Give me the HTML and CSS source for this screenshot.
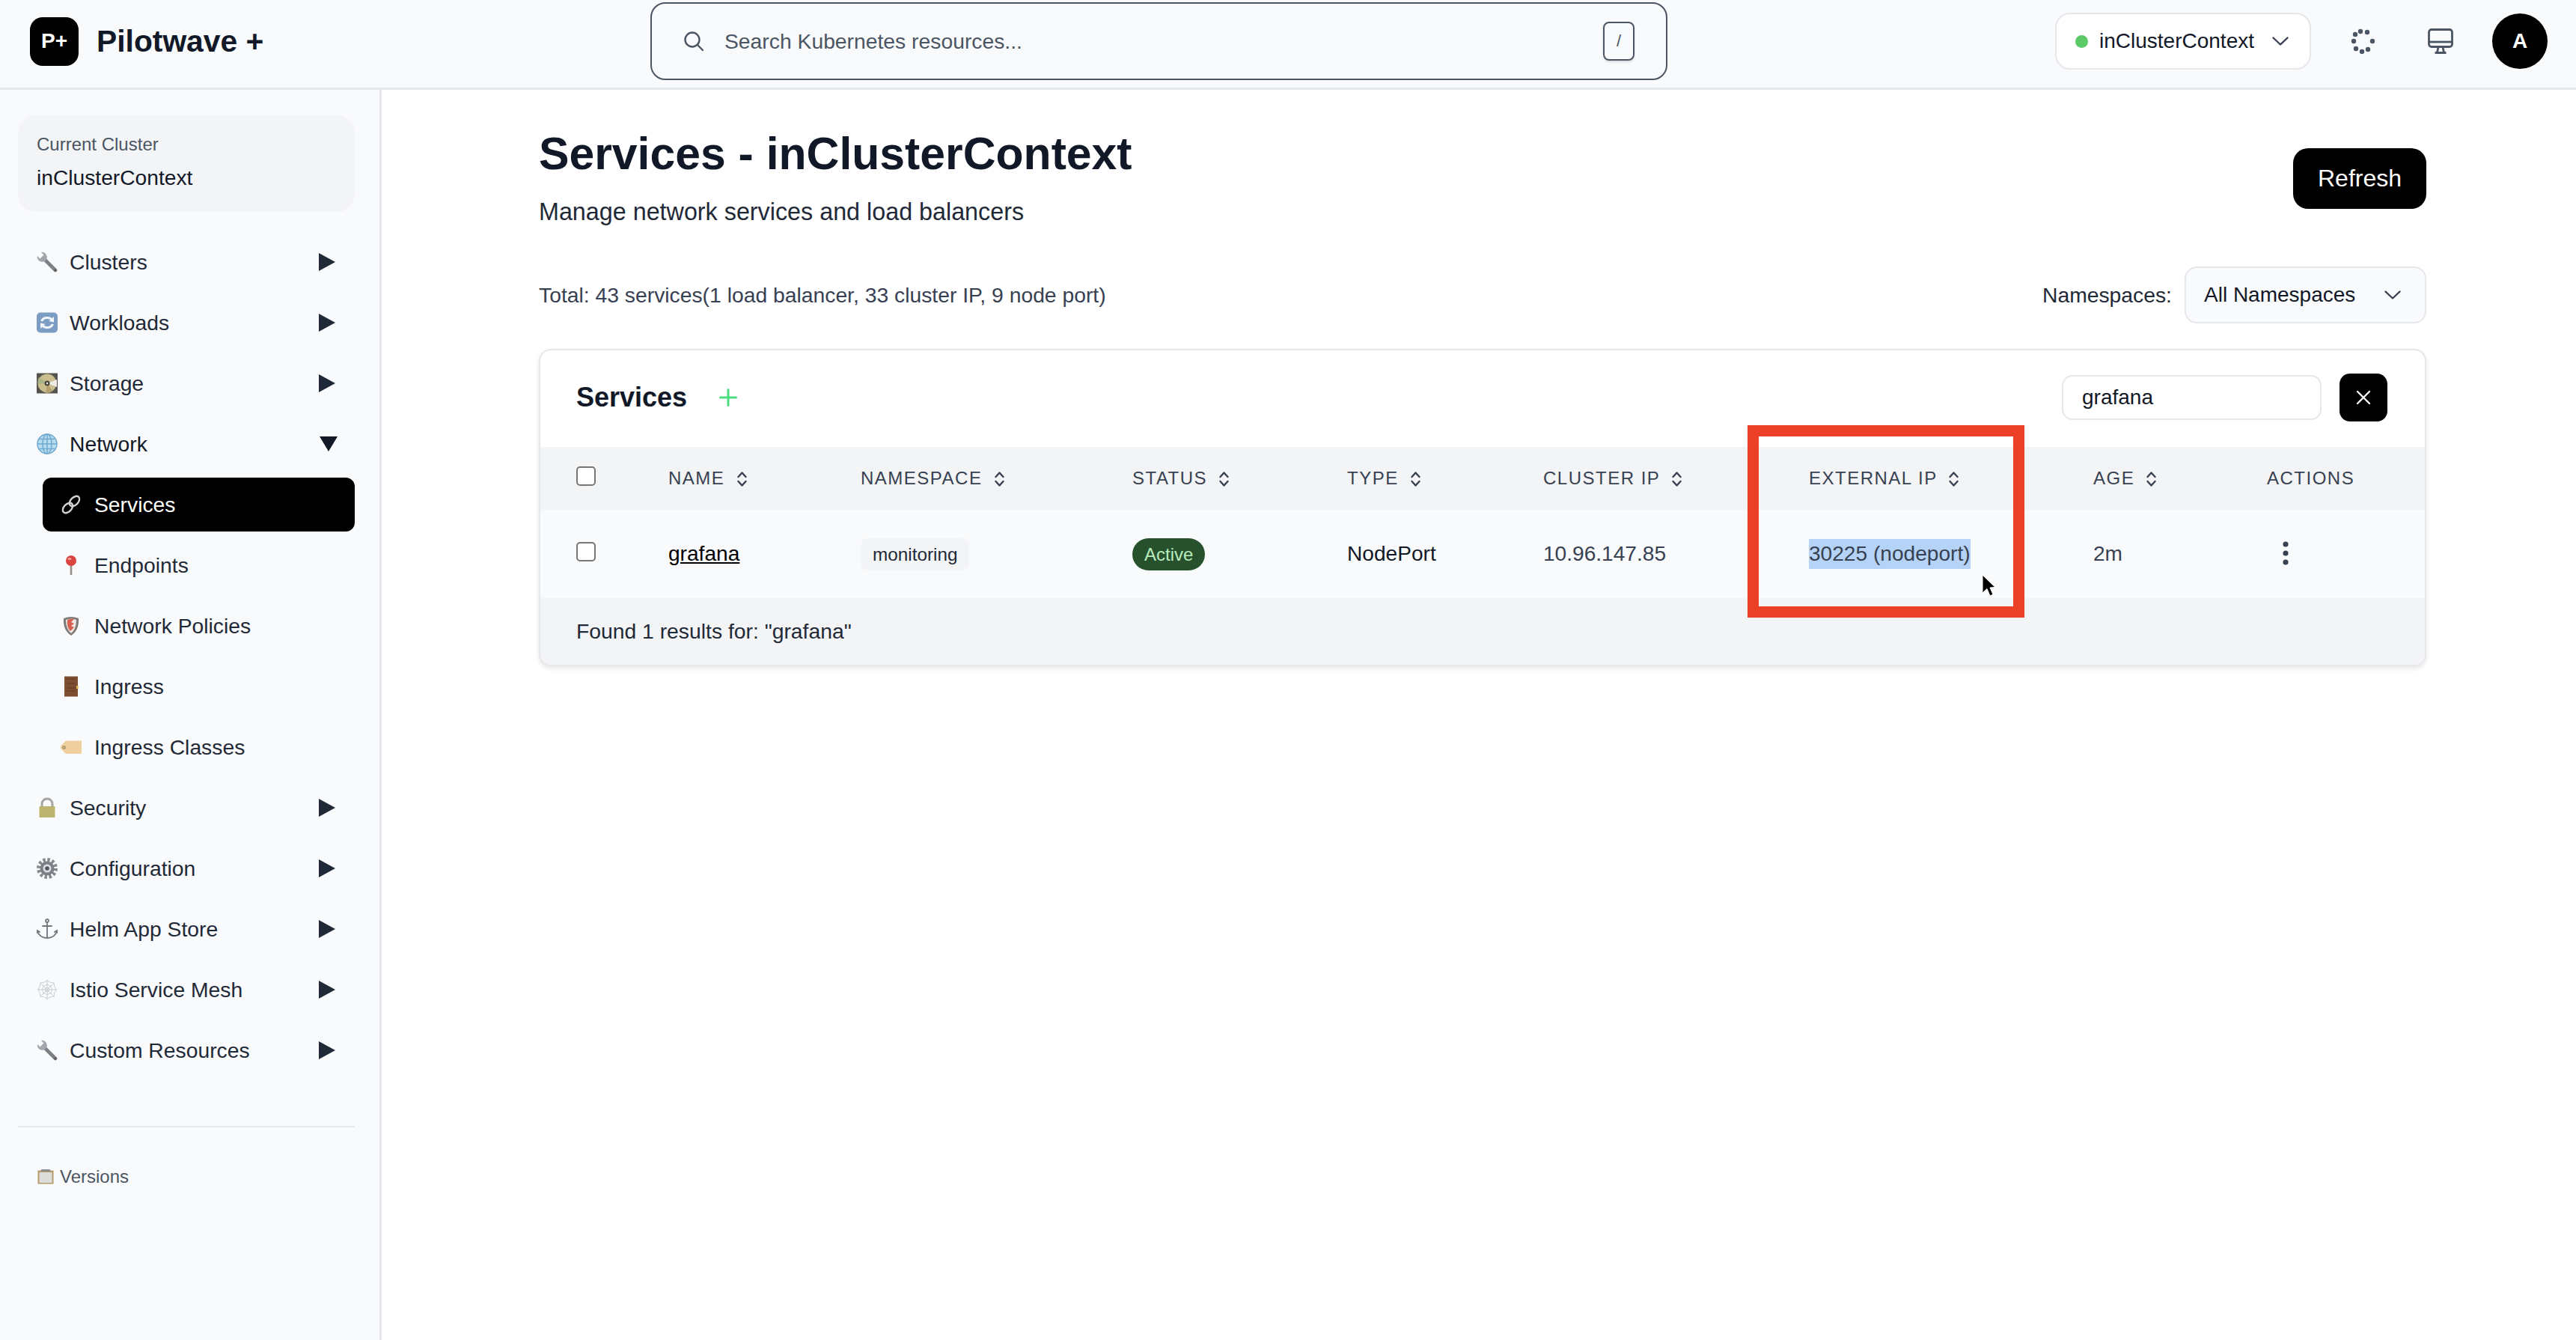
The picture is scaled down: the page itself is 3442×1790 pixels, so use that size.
FILE: index.html
```html
<!DOCTYPE html>
<html lang="en">
<head>
  <meta charset="UTF-8">
  <meta name="viewport" content="width=device-width, initial-scale=1.0">
  <title>Services - inClusterContext</title>
  <link rel="stylesheet" href="styles.css">
</head>
<body>
  <svg class="icon-defs" aria-hidden="true">
    <symbol id="ic-wrench" viewBox="0 0 28 28">
      <path d="M10 10 L25 25" stroke="#7d8086" stroke-width="4.600" stroke-linecap="round" fill="none"/>
      <path d="M6 1 L9.500 4.500 L4.500 9.500 L1 6 A6.500 6.500 0 1 0 6 1 Z" fill="#a2a5ab"/>
      <circle cx="25" cy="25" r="1.600" fill="#5f5454"/>
    </symbol>
    <symbol id="ic-sort" viewBox="0 0 15 22">
      <path d="M2.500 8 L7.500 2.500 L12.500 8 M2.500 14 L7.500 19.500 L12.500 14" stroke="#374151" stroke-width="2.400" fill="none" stroke-linecap="round" stroke-linejoin="round"/>
    </symbol>
  </svg>

  <header class="topbar">
    <div class="brand">
      <div class="brand-logo">P+</div>
      <div class="brand-name">Pilotwave +</div>
    </div>
    <div class="global-search">
      <svg class="search-icon" viewBox="0 0 28 28" fill="none" stroke="#4b5563" stroke-width="2.400" stroke-linecap="round">
        <circle cx="12" cy="12" r="9.500"/>
        <path d="M19 19 L26 26"/>
      </svg>
      <span class="search-text">Search Kubernetes resources...</span>
      <kbd class="search-key">/</kbd>
    </div>
    <div class="topbar-right">
      <div class="cluster-picker">
        <span class="status-dot"></span>
        <span class="cluster-name">inClusterContext</span>
        <svg class="chevron" viewBox="0 0 22 12" fill="none" stroke="#374151" stroke-width="2.400" stroke-linecap="round" stroke-linejoin="round">
          <path d="M1.500 1.500 L11 10.500 L20.500 1.500"/>
        </svg>
      </div>
      <svg class="spinner" viewBox="0 0 34 34" fill="#4b5563">
        <circle cx="13" cy="4" r="3.200"/>
        <circle cx="22" cy="5" r="3.200"/>
        <circle cx="29" cy="17" r="3.200"/>
        <circle cx="23" cy="28" r="3.200"/>
        <circle cx="15" cy="31" r="3.200"/>
        <circle cx="7" cy="27" r="3.200"/>
        <circle cx="4" cy="17" r="3.200"/>
        <circle cx="6" cy="8" r="3.200"/>
      </svg>
      <svg class="monitor" viewBox="0 0 34 34" fill="none" stroke="#4b5563" stroke-width="2.800" stroke-linejoin="round">
        <rect x="1.500" y="1.500" width="31" height="23" rx="3.500"/>
        <path d="M1.500 18 H32.500"/>
        <path d="M14 25 L12.500 32 M20 25 L21.500 32 M9.500 32.500 H24.500"/>
      </svg>
      <div class="avatar">A</div>
    </div>
  </header>

  <div class="layout">
    <aside class="sidebar">
      <div class="current-cluster">
        <div class="current-label">Current Cluster</div>
        <div class="current-value">inClusterContext</div>
      </div>

      <nav class="side-nav">
        <div class="nav-item">
          <svg class="nav-icon"><use href="#ic-wrench"/></svg>
          <span class="nav-label">Clusters</span>
          <span class="arrow-right"></span>
        </div>
        <div class="nav-item">
          <svg class="nav-icon" viewBox="0 0 28 28">
            <rect x="0" y="0.500" width="28" height="27" rx="5" fill="#7b9dc4"/>
            <path d="M6.500 12 A8 6.500 0 0 1 20 9.500" stroke="#f1f4f8" stroke-width="3" fill="none"/>
            <path d="M23 6 L23 13.500 L16.500 12 Z" fill="#f1f4f8"/>
            <path d="M21.500 16 A8 6.500 0 0 1 8 18.500" stroke="#f1f4f8" stroke-width="3" fill="none"/>
            <path d="M5 22 L5 14.500 L11.500 16 Z" fill="#f1f4f8"/>
          </svg>
          <span class="nav-label">Workloads</span>
          <span class="arrow-right"></span>
        </div>
        <div class="nav-item">
          <svg class="nav-icon" viewBox="0 0 28 28">
            <rect x="0" y="0.500" width="28" height="27" fill="#55534d"/>
            <circle cx="14" cy="14" r="12.500" fill="#c9bd8e"/>
            <path d="M14 14 L27 9 L27 19 Z" fill="#ebebe6"/>
            <path d="M14 14 L3 6 A13 13 0 0 0 2 15 Z" fill="#a9b487"/>
            <path d="M14 14 L12 27 A13 13 0 0 0 21 24.500 Z" fill="#b5a06f"/>
            <circle cx="14" cy="14" r="3.500" fill="#4a473f"/>
            <circle cx="14" cy="14" r="1.200" fill="#f5f5f0"/>
          </svg>
          <span class="nav-label">Storage</span>
          <span class="arrow-right"></span>
        </div>
        <div class="nav-item nav-open">
          <svg class="nav-icon" viewBox="0 0 28 28" fill="none" stroke="#6fa9cf" stroke-width="1.500">
            <circle cx="14" cy="14" r="13" fill="#b7dcef"/>
            <ellipse cx="14" cy="14" rx="6" ry="13"/>
            <path d="M14 1 V27 M1 14 H27 M3.500 7.500 H24.500 M3.500 20.500 H24.500"/>
          </svg>
          <span class="nav-label">Network</span>
          <span class="arrow-down"></span>
        </div>

        <div class="nav-item nav-sub nav-active">
          <svg class="nav-icon" viewBox="0 0 28 28" fill="none" stroke="#cfd1d5" stroke-width="2.400">
            <ellipse cx="9.500" cy="18.500" rx="8" ry="5" transform="rotate(-45 9.500 18.500)"/>
            <ellipse cx="18.500" cy="9.500" rx="8" ry="5" transform="rotate(-45 18.500 9.500)"/>
          </svg>
          <span class="nav-label">Services</span>
        </div>
        <div class="nav-item nav-sub">
          <svg class="nav-icon" viewBox="0 0 28 28">
            <path d="M14 14 V27" stroke="#94908c" stroke-width="2.600"/>
            <circle cx="14" cy="8" r="7" fill="#d9443f"/>
            <ellipse cx="12" cy="5.500" rx="2.500" ry="1.500" fill="#f3a5a0"/>
          </svg>
          <span class="nav-label">Endpoints</span>
        </div>
        <div class="nav-item nav-sub">
          <svg class="nav-icon" viewBox="0 0 28 28">
            <path d="M4 4 Q14 0 24 4 Q25 20 14 27 Q3 20 4 4 Z" fill="#7f7b78"/>
            <path d="M7 6 Q14 3 21 6 Q21 18 14 24 Q7 18 7 6 Z" fill="#efe9e4"/>
            <path d="M9 6 Q14 4 18 5 L14 9 L18 11 L14 14 L18 16 L13 21 Q8 16 9 6 Z" fill="#d9604f"/>
          </svg>
          <span class="nav-label">Network Policies</span>
        </div>
        <div class="nav-item nav-sub">
          <svg class="nav-icon" viewBox="0 0 28 28">
            <rect x="5" y="0.500" width="18" height="27" fill="#7d4e30"/>
            <path d="M8 4 H20 M8 10 H20 M8 16 H20 M8 20 H20" stroke="#5f3a22" stroke-width="1.200"/>
            <rect x="21" y="13" width="2.600" height="4" fill="#d9b24a"/>
          </svg>
          <span class="nav-label">Ingress</span>
        </div>
        <div class="nav-item nav-sub">
          <svg class="nav-icon" viewBox="0 0 28 28">
            <path d="M7 5.500 H28 V23 H7 L0 16 V12.500 Z" fill="#f0cf9e"/>
            <circle cx="4.500" cy="14.500" r="1.700" fill="none" stroke="#8d7a5c" stroke-width="1.100"/>
          </svg>
          <span class="nav-label">Ingress Classes</span>
        </div>

        <div class="nav-item">
          <svg class="nav-icon" viewBox="0 0 28 28">
            <path d="M7 13 V9 A7 7 0 0 1 21 9 V13" fill="none" stroke="#a6a6a0" stroke-width="3"/>
            <rect x="3.500" y="12" width="21" height="15" rx="1" fill="#bdb56f"/>
          </svg>
          <span class="nav-label">Security</span>
          <span class="arrow-right"></span>
        </div>
        <div class="nav-item">
          <svg class="nav-icon" viewBox="0 0 28 28">
            <circle cx="14" cy="14" r="11.500" fill="none" stroke="#83878d" stroke-width="5" stroke-dasharray="3.400 2.620"/>
            <circle cx="14" cy="14" r="9.500" fill="#7b7f86"/>
            <circle cx="14" cy="14" r="5.500" fill="#dcdde0"/>
            <circle cx="14" cy="14" r="2.800" fill="#50535a"/>
          </svg>
          <span class="nav-label">Configuration</span>
          <span class="arrow-right"></span>
        </div>
        <div class="nav-item">
          <svg class="nav-icon" viewBox="0 0 28 28" fill="none" stroke="#72777f" stroke-width="1.800" stroke-linecap="round">
            <circle cx="14" cy="3" r="2"/>
            <path d="M14 5 V26 M8 10 H20 M1 17 Q4 26 14 26 Q24 26 27 17"/>
            <path d="M0.500 19 L1 16 L4 18 M27.500 19 L27 16 L24 18"/>
          </svg>
          <span class="nav-label">Helm App Store</span>
          <span class="arrow-right"></span>
        </div>
        <div class="nav-item">
          <svg class="nav-icon" viewBox="0 0 28 28" fill="none" stroke="#c6c9cd" stroke-width="0.900">
            <path d="M0.500 14 H27.500 M4.500 4.500 L23.500 23.500 M23.500 4.500 L4.500 23.500 M14 0.500 V27.500"/>
            <path d="M14 2 Q18 5 23 5 Q23 10 26 14 Q23 18 23 23 Q18 23 14 26 Q10 23 5 23 Q5 18 2 14 Q5 10 5 5 Q10 5 14 2 Z"/>
            <path d="M14 7 Q16.500 9 19 9 Q19 11.500 21 14 Q19 16.500 19 19 Q16.500 19 14 21 Q11.500 19 9 19 Q9 16.500 7 14 Q9 11.500 9 9 Q11.500 9 14 7 Z"/>
            <path d="M14 11 L16 12 L17 14 L16 16 L14 17 L12 16 L11 14 L12 12 Z"/>
          </svg>
          <span class="nav-label">Istio Service Mesh</span>
          <span class="arrow-right"></span>
        </div>
        <div class="nav-item">
          <svg class="nav-icon"><use href="#ic-wrench"/></svg>
          <span class="nav-label">Custom Resources</span>
          <span class="arrow-right"></span>
        </div>
      </nav>

      <div class="side-footer">
        <svg class="versions-icon" viewBox="0 0 22 22">
          <rect x="0.500" y="2.500" width="21" height="18" fill="#b59a6d"/>
          <rect x="2.500" y="5" width="17" height="14" fill="#dcdcda"/>
          <rect x="5" y="1" width="12" height="3" fill="#8e8e8e"/>
        </svg>
        <span>Versions</span>
      </div>
    </aside>

    <main class="content">
      <div class="page-head">
        <div>
          <h1 class="page-title">Services - inClusterContext</h1>
          <p class="page-sub">Manage network services and load balancers</p>
        </div>
        <button class="refresh-btn">Refresh</button>
      </div>

      <div class="toolbar">
        <div class="totals">Total: 43 services(1 load balancer, 33 cluster IP, 9 node port)</div>
        <div class="ns-filter">
          <span class="ns-label">Namespaces:</span>
          <div class="ns-select">
            <span>All Namespaces</span>
            <svg class="chevron" viewBox="0 0 22 12" fill="none" stroke="#374151" stroke-width="2.400" stroke-linecap="round" stroke-linejoin="round">
              <path d="M1.500 1.500 L11 10.500 L20.500 1.500"/>
            </svg>
          </div>
        </div>
      </div>

      <section class="card">
        <div class="card-head">
          <h2 class="card-title">Services</h2>
          <svg class="add-icon" viewBox="0 0 24 24" stroke="#4ade80" stroke-width="3" stroke-linecap="round">
            <path d="M12 1.500 V22.500 M1.500 12 H22.500"/>
          </svg>
          <div class="card-search">
            <div class="filter-input">grafana</div>
            <button class="clear-btn">
              <svg viewBox="0 0 20 20" stroke="#fff" stroke-width="2.400" stroke-linecap="round">
                <path d="M2 2 L18 18 M18 2 L2 18"/>
              </svg>
            </button>
          </div>
        </div>

        <table class="svc-table">
          <colgroup>
            <col class="col-check">
            <col class="col-name">
            <col class="col-ns">
            <col class="col-status">
            <col class="col-type">
            <col class="col-cluster">
            <col class="col-external">
            <col class="col-age">
            <col>
          </colgroup>
          <thead>
            <tr>
              <th><input type="checkbox" class="check"></th>
              <th>Name <svg class="sort"><use href="#ic-sort"/></svg></th>
              <th>Namespace <svg class="sort"><use href="#ic-sort"/></svg></th>
              <th>Status <svg class="sort"><use href="#ic-sort"/></svg></th>
              <th>Type <svg class="sort"><use href="#ic-sort"/></svg></th>
              <th>Cluster IP <svg class="sort"><use href="#ic-sort"/></svg></th>
              <th>External IP <svg class="sort"><use href="#ic-sort"/></svg></th>
              <th>Age <svg class="sort"><use href="#ic-sort"/></svg></th>
              <th>Actions</th>
            </tr>
          </thead>
          <tbody>
            <tr>
              <td><input type="checkbox" class="check"></td>
              <td><a class="svc-link" href="#">grafana</a></td>
              <td><span class="chip">monitoring</span></td>
              <td><span class="badge-active">Active</span></td>
              <td class="dark">NodePort</td>
              <td>10.96.147.85</td>
              <td><span class="selected">30225 (nodeport)</span></td>
              <td>2m</td>
              <td>
                <svg class="dots" viewBox="0 0 8 32" fill="#374151">
                  <circle cx="4" cy="4" r="3.600"/>
                  <circle cx="4" cy="16" r="3.600"/>
                  <circle cx="4" cy="28" r="3.600"/>
                </svg>
              </td>
            </tr>
          </tbody>
        </table>

        <div class="card-foot">Found 1 results for: "grafana"</div>

        <div class="callout"></div>
        <svg class="pointer" viewBox="0 0 20 32">
          <path d="M2 1 L2 25 L8 19.500 L12 29 L16 27 L12 18 L19 17.500 Z" fill="#000" stroke="#fff" stroke-width="1"/>
        </svg>
      </section>
    </main>
  </div>
</body>
</html>
```

FILE: styles.css
```css
* {
  box-sizing: border-box;
}
body {
  margin: 0;
  height: 100vh;
  overflow: hidden;
  font-family: "Liberation Sans", Arial, sans-serif;
  background-color: #fff;
  color: #111827;
}
.icon-defs {
  display: none;
}

/* top bar */
.topbar {
  height: 120px;
  padding: 0 38px 7px 40px;
  display: flex;
  align-items: center;
  background-color: #f9fafb;
  border-bottom: 3px solid #e5e7eb;
}
.brand {
  width: 829px;
  display: flex;
  align-items: center;
  gap: 24px;
}
.brand-logo {
  width: 65px;
  height: 65px;
  border-radius: 17px;
  background-color: #000;
  color: #fff;
  font-weight: bold;
  font-size: 28px;
  display: flex;
  align-items: center;
  justify-content: center;
}
.brand-name {
  font-weight: bold;
  font-size: 40.800px;
  color: #111827;
}
.global-search {
  width: 1359px;
  height: 104px;
  padding: 0 42px 0 42px;
  display: flex;
  align-items: center;
  border: 2.500px solid #4b5563;
  border-radius: 20px;
}
.search-icon {
  width: 28px;
  height: 28px;
}
.search-text {
  flex: 1;
  margin-left: 27px;
  font-size: 28.300px;
  color: #4b5563;
}
.search-key {
  width: 42px;
  height: 52px;
  display: flex;
  align-items: center;
  justify-content: center;
  border: 2px solid #4b5563;
  border-radius: 8px;
  font-family: "Liberation Sans", Arial, sans-serif;
  font-size: 22px;
  color: #4b5563;
  box-shadow: 0 2px 3px rgba(0, 0, 0, 0.12);
}
.topbar-right {
  margin-left: auto;
  display: flex;
  align-items: center;
}
.cluster-picker {
  width: 342px;
  height: 76px;
  padding: 0 28px 0 25px;
  display: flex;
  align-items: center;
  background-color: #fff;
  border: 2px solid #e5e7eb;
  border-radius: 20px;
}
.status-dot {
  width: 17px;
  height: 17px;
  border-radius: 50%;
  background-color: #5ac966;
}
.cluster-name {
  flex: 1;
  margin-left: 15px;
  font-size: 28px;
  color: #111827;
}
.chevron {
  width: 22px;
  height: 12px;
}
.spinner {
  width: 34px;
  height: 34px;
  margin-left: 53px;
}
.monitor {
  width: 34px;
  height: 34px;
  margin-left: 69px;
}
.avatar {
  width: 74px;
  height: 74px;
  margin-left: 52px;
  border-radius: 50%;
  background-color: #000;
  color: #fff;
  font-weight: bold;
  font-size: 28px;
  display: flex;
  align-items: center;
  justify-content: center;
}

.layout {
  display: flex;
  height: calc(100vh - 120px);
}

/* sidebar */
.sidebar {
  width: 510px;
  flex-shrink: 0;
  padding: 34px 33px 0 24px;
  background-color: #f9fafb;
  border-right: 3px solid #e5e7eb;
}
.current-cluster {
  height: 129px;
  padding: 22px 25px 0;
  background-color: #f3f4f6;
  border-radius: 24px;
}
.current-label {
  font-size: 24px;
  line-height: 34px;
  color: #4b5563;
}
.current-value {
  margin-top: 7px;
  font-size: 28.200px;
  line-height: 40px;
  color: #111827;
}
.side-nav {
  margin-top: 31px;
  display: flex;
  flex-direction: column;
  gap: 9px;
}
.nav-item {
  height: 72px;
  padding: 0 26px 0 25px;
  display: flex;
  align-items: center;
  font-size: 28.300px;
  color: #1f2937;
}
.nav-icon {
  width: 28px;
  height: 28px;
  flex-shrink: 0;
}
.nav-label {
  flex: 1;
  margin-left: 16px;
}
.nav-open {
  color: #111827;
}
.nav-sub {
  margin-left: 33px;
  padding-left: 24px;
  border-radius: 12px;
}
.nav-sub .nav-label {
  margin-left: 17px;
}
.nav-active {
  background-color: #000;
  color: #fff;
}
.arrow-right {
  width: 0;
  height: 0;
  border-left: 22px solid #1f2937;
  border-top: 12px solid transparent;
  border-bottom: 12px solid transparent;
}
.arrow-down {
  width: 0;
  height: 0;
  margin-right: -3px;
  border-top: 20px solid #111827;
  border-left: 12.500px solid transparent;
  border-right: 12.500px solid transparent;
}
.side-footer {
  margin-top: 65px;
  padding: 52px 0 0 26px;
  display: flex;
  align-items: center;
  gap: 8px;
  font-size: 24px;
  color: #4b5563;
  border-top: 2px solid #e5e7eb;
}
.versions-icon {
  width: 22px;
  height: 22px;
}

/* main */
.content {
  flex: 1;
  padding: 45px 200px 0 210px;
}
.page-head {
  display: flex;
  align-items: center;
  justify-content: space-between;
}
.page-title {
  margin: 0;
  font-size: 60.700px;
  line-height: 80px;
  font-weight: bold;
  color: #111827;
}
.page-sub {
  margin: 14px 0 0;
  font-size: 32.300px;
  line-height: 48px;
  color: #1f2937;
}
.refresh-btn {
  width: 178px;
  height: 81px;
  margin-top: 4px;
  background-color: #000;
  color: #fff;
  border: none;
  border-radius: 20px;
  font-family: inherit;
  font-size: 32px;
}
.toolbar {
  margin-top: 49px;
  display: flex;
  align-items: center;
  justify-content: space-between;
}
.totals {
  font-size: 28.300px;
  color: #374151;
}
.ns-filter {
  display: flex;
  align-items: center;
  gap: 17px;
}
.ns-label {
  font-size: 28.300px;
  color: #1f2937;
}
.ns-select {
  width: 323px;
  height: 76px;
  padding: 0 32px 0 24px;
  display: flex;
  align-items: center;
  justify-content: space-between;
  background-color: #f9fafb;
  border: 2px solid #e5e7eb;
  border-radius: 16px;
  font-size: 28px;
  color: #111827;
}

/* card */
.card {
  position: relative;
  margin-top: 34px;
  background-color: #fff;
  border: 2px solid #e5e7eb;
  border-radius: 16px;
  box-shadow: 0 3px 6px rgba(0, 0, 0, 0.1);
  overflow: hidden;
}
.card-head {
  height: 129px;
  padding: 0 50px 3px 48px;
  display: flex;
  align-items: center;
}
.card-title {
  margin: 0;
  font-size: 36px;
  font-weight: bold;
  color: #111827;
}
.add-icon {
  width: 24px;
  height: 24px;
  margin-left: 43px;
}
.card-search {
  margin-left: auto;
  display: flex;
  align-items: center;
  gap: 24px;
}
.filter-input {
  width: 347px;
  height: 60px;
  padding-left: 25px;
  display: flex;
  align-items: center;
  background-color: #fff;
  border: 2px solid #e5e7eb;
  border-radius: 14px;
  font-size: 28px;
  color: #111827;
}
.clear-btn {
  width: 64px;
  height: 64px;
  padding: 0;
  display: flex;
  align-items: center;
  justify-content: center;
  background-color: #000;
  border: none;
  border-radius: 14px;
}
.clear-btn svg {
  width: 20px;
  height: 20px;
}

/* table */
.svc-table {
  width: 100%;
  table-layout: fixed;
  border-collapse: collapse;
}
.col-check { width: 171px; }
.col-name { width: 257px; }
.col-ns { width: 363px; }
.col-status { width: 287px; }
.col-type { width: 262px; }
.col-cluster { width: 355px; }
.col-external { width: 380px; }
.col-age { width: 232px; }
.svc-table th,
.svc-table td {
  padding: 0;
  text-align: left;
}
.svc-table th:first-child,
.svc-table td:first-child {
  padding-left: 48px;
}
.svc-table thead tr {
  height: 84px;
  background-color: #f3f4f6;
}
.svc-table th {
  font-size: 24px;
  font-weight: normal;
  letter-spacing: 1.500px;
  text-transform: uppercase;
  color: #374151;
  white-space: nowrap;
}
.svc-table tbody tr {
  height: 118px;
  background-color: #f9fafb;
}
.svc-table td {
  font-size: 28.100px;
  color: #374151;
}
.svc-table td.dark {
  color: #111827;
}
.sort {
  width: 15px;
  height: 22px;
  margin-left: 7px;
  vertical-align: -4px;
}
.check {
  appearance: none;
  display: block;
  width: 26px;
  height: 26px;
  margin: 0 0 7px;
  background-color: #fff;
  border: 2px solid #767676;
  border-radius: 5px;
}
.svc-link {
  color: #000;
}
.chip {
  display: inline-block;
  padding: 0 16px;
  line-height: 43px;
  background-color: #f3f4f6;
  border-radius: 10px;
  font-size: 24.300px;
  color: #1f2937;
}
.badge-active {
  display: inline-block;
  padding: 0 16px;
  line-height: 43px;
  background-color: #27502d;
  border-radius: 22px;
  font-size: 24px;
  color: #b9ecbd;
}
.selected {
  display: inline-block;
  line-height: 40px;
  background-color: #b4d3f6;
}
.dots {
  display: block;
  width: 8px;
  height: 32px;
  margin: -2px 0 0 21px;
}
.card-foot {
  height: 89px;
  padding-left: 48px;
  display: flex;
  align-items: center;
  background-color: #f3f4f6;
  font-size: 28.300px;
  color: #1f2937;
}

/* annotation over the screenshot */
.callout {
  position: absolute;
  left: 1613px;
  top: 100px;
  width: 370px;
  height: 257px;
  border: 15px solid #ec4126;
}
.pointer {
  position: absolute;
  left: 1925px;
  top: 299px;
  width: 20px;
  height: 32px;
}
```
